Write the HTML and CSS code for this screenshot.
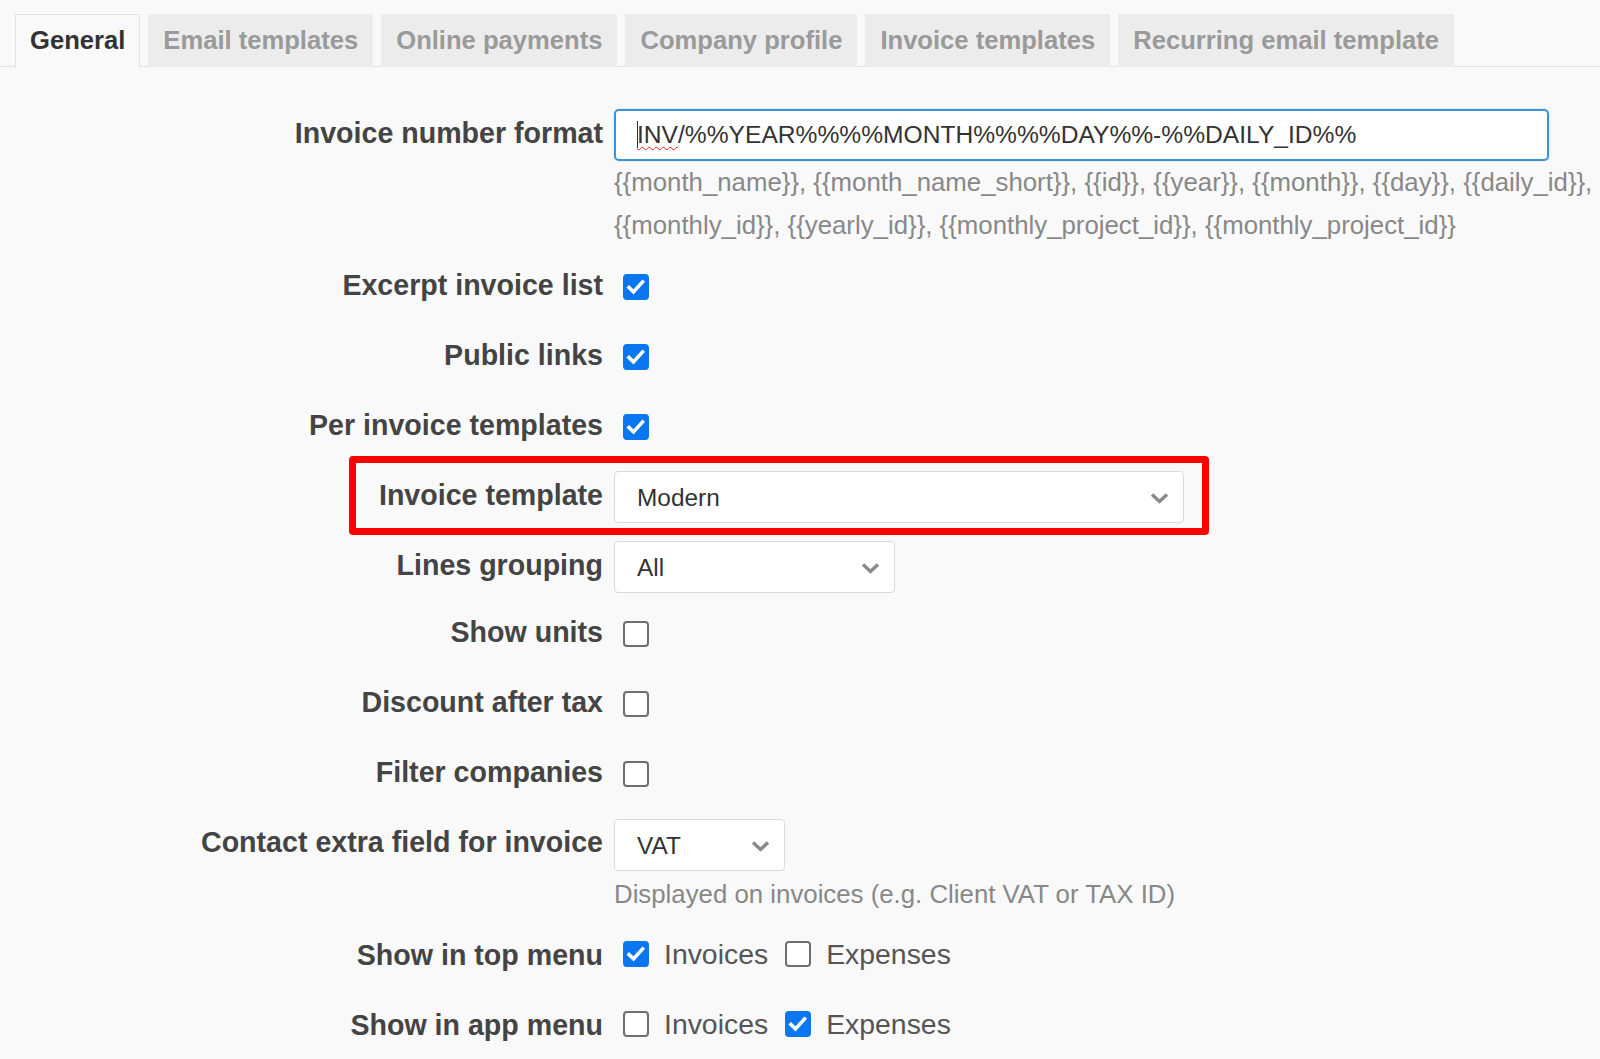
FILE: index.html
```html
<!DOCTYPE html>
<html lang="en">
<head>
<meta charset="utf-8">
<title>Settings - General</title>
<link rel="stylesheet" href="styles.css">
</head>
<body>
<nav class="tabs">
  <a class="tab active">General</a>
  <a class="tab">Email templates</a>
  <a class="tab">Online payments</a>
  <a class="tab">Company profile</a>
  <a class="tab">Invoice templates</a>
  <a class="tab">Recurring email template</a>
</nav>

<form class="form">
  <div class="row row-tall">
    <label class="lbl">Invoice number format</label>
    <div class="ctrl">
      <div class="input focus"><span class="caret"></span><span class="typo">INV</span>/%%YEAR%%%%MONTH%%%%DAY%%-%%DAILY_ID%%</div>
      <p class="help help-wide">{{month_name}}, {{month_name_short}}, {{id}}, {{year}}, {{month}}, {{day}}, {{daily_id}},<br>{{monthly_id}}, {{yearly_id}}, {{monthly_project_id}}, {{monthly_project_id}}</p>
    </div>
  </div>

  <div class="row">
    <label class="lbl">Excerpt invoice list</label>
    <div class="ctrl"><span class="cb on"><svg viewBox="0 0 26 26"><path d="M6 13.5 L10.5 18 L19.5 8"/></svg></span></div>
  </div>

  <div class="row">
    <label class="lbl">Public links</label>
    <div class="ctrl"><span class="cb on"><svg viewBox="0 0 26 26"><path d="M6 13.5 L10.5 18 L19.5 8"/></svg></span></div>
  </div>

  <div class="row">
    <label class="lbl">Per invoice templates</label>
    <div class="ctrl"><span class="cb on"><svg viewBox="0 0 26 26"><path d="M6 13.5 L10.5 18 L19.5 8"/></svg></span></div>
  </div>

  <div class="row highlighted">
    <div class="annot"></div>
    <label class="lbl">Invoice template</label>
    <div class="ctrl">
      <div class="select w-modern"><span>Modern</span><svg class="chev" viewBox="0 0 20 12"><path d="M2.5 2.5 L10 9.5 L17.5 2.5"/></svg></div>
    </div>
  </div>

  <div class="row row-select">
    <label class="lbl">Lines grouping</label>
    <div class="ctrl">
      <div class="select w-all"><span>All</span><svg class="chev" viewBox="0 0 20 12"><path d="M2.5 2.5 L10 9.5 L17.5 2.5"/></svg></div>
    </div>
  </div>

  <div class="row">
    <label class="lbl">Show units</label>
    <div class="ctrl"><span class="cb"></span></div>
  </div>

  <div class="row">
    <label class="lbl">Discount after tax</label>
    <div class="ctrl"><span class="cb"></span></div>
  </div>

  <div class="row">
    <label class="lbl">Filter companies</label>
    <div class="ctrl"><span class="cb"></span></div>
  </div>

  <div class="row row-tall row-contact">
    <label class="lbl">Contact extra field for invoice</label>
    <div class="ctrl">
      <div class="select w-vat sel-low"><span>VAT</span><svg class="chev" viewBox="0 0 20 12"><path d="M2.5 2.5 L10 9.5 L17.5 2.5"/></svg></div>
      <p class="help help-note">Displayed on invoices (e.g. Client VAT or TAX ID)</p>
    </div>
  </div>

  <div class="row row-menu">
    <label class="lbl lbl-mid">Show in top menu</label>
    <div class="ctrl inline">
      <span class="opt"><span class="cb on"><svg viewBox="0 0 26 26"><path d="M6 13.5 L10.5 18 L19.5 8"/></svg></span>Invoices</span>
      <span class="opt"><span class="cb"></span>Expenses</span>
    </div>
  </div>

  <div class="row">
    <label class="lbl lbl-mid">Show in app menu</label>
    <div class="ctrl inline">
      <span class="opt"><span class="cb"></span>Invoices</span>
      <span class="opt"><span class="cb on"><svg viewBox="0 0 26 26"><path d="M6 13.5 L10.5 18 L19.5 8"/></svg></span>Expenses</span>
    </div>
  </div>
</form>
</body>
</html>
```

FILE: styles.css
```css
* { box-sizing: border-box; }

html, body {
  margin: 0;
  padding: 0;
  background: #f9f9f9;
  overflow: hidden;
}

body {
  font-family: "Liberation Sans", Arial, Helvetica, sans-serif;
  color: #444;
}

/* Tabs */
.tabs {
  display: flex;
  gap: 8px;
  padding: 14px 0 0 15px;
  border-bottom: 1px solid #e2e2e2;
  height: 67px;
}

.tab {
  display: block;
  height: 53px;
  padding: 0 14px;
  line-height: 50px;
  font-size: 25.6px;
  font-weight: bold;
  color: #9a9a9a;
  background: #ececec;
  border: 1px solid #ececec;
  border-bottom: 0;
  white-space: nowrap;
}

.tab.active {
  color: #333;
  background: #f9f9f9;
  border-color: #e2e2e2;
  height: 54px;
  margin-bottom: -1px;
}

/* Form */
.form {
  padding-top: 42px;
}

.row {
  position: relative;
  display: grid;
  grid-template-columns: 603px 1fr;
  column-gap: 11px;
  min-height: 52px;
  margin-bottom: 18px;
}

.row-tall {
  margin-bottom: 14px;
}

.row-select {
  margin-bottom: 15px;
}

.row-contact {
  margin-bottom: 12px;
}

.row-menu {
  margin-bottom: 16px;
}

.lbl {
  display: block;
  text-align: right;
  font-size: 28.6px;
  font-weight: bold;
  line-height: 48px;
  color: #444;
  white-space: nowrap;
}

.lbl-mid {
  line-height: 54px;
}

.ctrl {
  min-width: 0;
}

.ctrl.inline {
  display: flex;
  align-items: center;
  height: 52px;
}

/* Input */
.input {
  width: 935px;
  height: 52px;
  background: #fff;
  border: 2px solid #3a93d4;
  border-radius: 5px;
  padding-left: 21px;
  font-size: 24.6px;
  line-height: 48px;
  color: #333;
  white-space: nowrap;
  box-shadow: 0 0 2px rgba(58, 147, 212, 0.35);
}

.caret {
  display: inline-block;
  width: 1px;
  height: 27px;
  background: #333;
  vertical-align: -5px;
  margin-right: -1px;
}

.typo {
  text-decoration: underline wavy #e02020;
  text-decoration-thickness: 1px;
  text-underline-offset: 3px;
}

.help {
  margin: 0;
  font-size: 25.8px;
  line-height: 43px;
  color: #888;
  white-space: nowrap;
}

.help-note {
  margin-top: 2px;
}

/* Checkboxes */
.cb {
  display: inline-flex;
  align-items: center;
  justify-content: center;
  width: 26px;
  height: 26px;
  margin: 13px 0 0 9px;
  border: 2px solid #6e6e6e;
  border-radius: 4px;
  background: #fff;
  vertical-align: top;
}

.cb.on {
  background: #0b76f2;
  border-color: #0b76f2;
}

.cb svg {
  width: 26px;
  height: 26px;
  flex: none;
  fill: none;
  stroke: #fff;
  stroke-width: 3.6;
  stroke-linecap: square;
  stroke-linejoin: miter;
}

.inline .cb {
  margin: 0 15px 0 0;
}

.opt {
  display: inline-flex;
  align-items: center;
  font-size: 28.4px;
  color: #555;
  margin-right: 17px;
}

.opt:first-child {
  margin-left: 9px;
}

/* Selects */
.select {
  position: relative;
  display: flex;
  align-items: center;
  justify-content: space-between;
  height: 52px;
  background: #fff;
  border: 1px solid #dadada;
  border-radius: 4px;
  padding: 2px 13px 0 22px;
  font-size: 24.4px;
  color: #333;
}

.sel-low {
  margin-top: 1px;
}

.w-modern { width: 570px; }
.w-all { width: 281px; }
.w-vat { width: 171px; }

.chev {
  width: 21px;
  height: 12px;
  fill: none;
  stroke: #8a8a8a;
  stroke-width: 3.4;
}

/* Red annotation box */
.annot {
  position: absolute;
  left: 349px;
  top: -15px;
  width: 860px;
  height: 79px;
  border: 7px solid #ff0000;
  border-radius: 4px;
  pointer-events: none;
}
```
